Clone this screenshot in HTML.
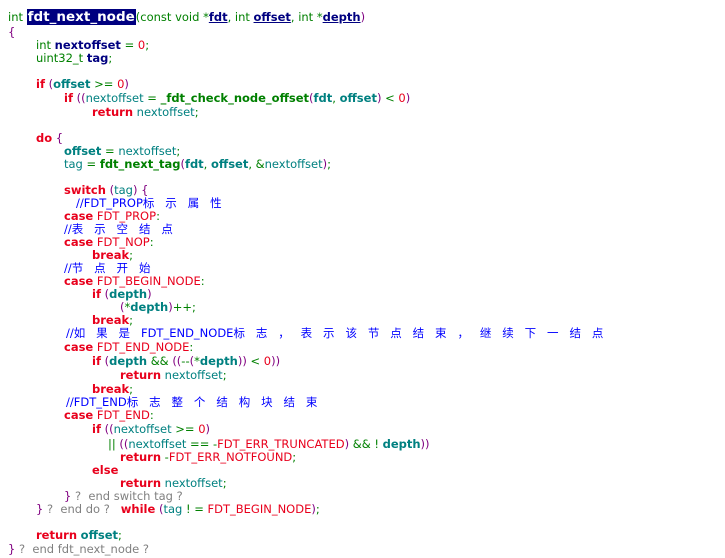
<!DOCTYPE html>
<html><head><meta charset="utf-8"><style>
body{margin:0;width:725px;height:558px;background:#fff;overflow:hidden;position:relative;font-family:"DejaVu Sans","Liberation Sans","Noto Sans CJK SC",sans-serif;font-size:11.5px;}
.l{position:absolute;white-space:pre;height:14px;line-height:14px;}
.k{color:#e8001c;font-weight:bold}
.c{color:#e8001c}
.v{color:#008080}
.vb{color:#008080;font-weight:bold}
.p{color:#000080;font-weight:bold}
.pu{color:#000080;font-weight:bold;text-decoration:underline}
.g{color:#008000}
.f{color:#008000;font-weight:bold}
.pr{color:#800080}
.n{color:#e8001c}
.cm{color:#0000ff}
.cj{letter-spacing:10.9px}
.gr{color:#808080}
.hl{background:#000080;color:#fff;font-weight:bold;font-size:13.5px;padding:0 1px}
</style></head><body>
<div class="l" style="left:8px;top:10px"><span class="g">int </span><span class="hl">fdt_next_node</span><span class="g">(const void *</span><span class="pu">fdt</span><span class="g">, int </span><span class="pu">offset</span><span class="g">, int *</span><span class="pu">depth</span><span class="pr">)</span></div>
<div class="l pr" style="left:8px;top:25px">{</div>
<div class="l" style="left:36px;top:38px"><span class="g">int </span><span class="p">nextoffset</span><span class="g"> = </span><span class="n">0</span><span class="g">;</span></div>
<div class="l" style="left:36px;top:51px"><span class="g">uint32_t </span><span class="p">tag</span><span class="g">;</span></div>
<div class="l" style="left:36px;top:77px"><span class="k">if</span> <span class="pr">(</span><span class="vb">offset</span><span class="g"> &gt;= </span><span class="n">0</span><span class="pr">)</span></div>
<div class="l" style="left:64px;top:91px"><span class="k">if</span> <span class="pr">((</span><span class="v">nextoffset</span><span class="g"> = </span><span class="f">_fdt_check_node_offset</span><span class="pr">(</span><span class="vb">fdt</span><span class="g">, </span><span class="vb">offset</span><span class="pr">)</span><span class="g"> &lt; </span><span class="n">0</span><span class="pr">)</span></div>
<div class="l" style="left:92px;top:105px"><span class="k">return</span> <span class="v">nextoffset</span><span class="g">;</span></div>
<div class="l" style="left:36px;top:131px"><span class="k">do</span> <span class="pr">{</span></div>
<div class="l" style="left:64px;top:144px"><span class="vb">offset</span><span class="g"> = </span><span class="v">nextoffset</span><span class="g">;</span></div>
<div class="l" style="left:64px;top:157px"><span class="v">tag</span><span class="g"> = </span><span class="f">fdt_next_tag</span><span class="pr">(</span><span class="vb">fdt</span><span class="g">, </span><span class="vb">offset</span><span class="g">, &amp;</span><span class="v">nextoffset</span><span class="pr">)</span><span class="g">;</span></div>
<div class="l" style="left:64px;top:183px"><span class="k">switch</span> <span class="pr">(</span><span class="v">tag</span><span class="pr">) {</span></div>
<div class="l cm" style="left:76px;top:196px">//FDT_PROP<span class="cj">标示属性</span></div>
<div class="l" style="left:64px;top:209px"><span class="k">case</span> <span class="c">FDT_PROP</span><span class="g">:</span></div>
<div class="l cm" style="left:64px;top:222px">//<span class="cj">表示空结点</span></div>
<div class="l" style="left:64px;top:235px"><span class="k">case</span> <span class="c">FDT_NOP</span><span class="g">:</span></div>
<div class="l" style="left:92px;top:248px"><span class="k">break</span><span class="g">;</span></div>
<div class="l cm" style="left:64px;top:261px">//<span class="cj">节点开始</span></div>
<div class="l" style="left:64px;top:274px"><span class="k">case</span> <span class="c">FDT_BEGIN_NODE</span><span class="g">:</span></div>
<div class="l" style="left:92px;top:287px"><span class="k">if</span> <span class="pr">(</span><span class="vb">depth</span><span class="pr">)</span></div>
<div class="l" style="left:120px;top:300px"><span class="pr">(</span><span class="g">*</span><span class="vb">depth</span><span class="pr">)</span><span class="g">++;</span></div>
<div class="l" style="left:92px;top:313px"><span class="k">break</span><span class="g">;</span></div>
<div class="l cm" style="left:66px;top:326px">//<span class="cj">如果是</span>FDT_END_NODE<span class="cj">标志，表示该节点结束，继续下一结点</span></div>
<div class="l" style="left:64px;top:340px"><span class="k">case</span> <span class="c">FDT_END_NODE</span><span class="g">:</span></div>
<div class="l" style="left:92px;top:354px"><span class="k">if</span> <span class="pr">(</span><span class="vb">depth</span><span class="g"> &amp;&amp; </span><span class="pr">((</span><span class="g">--</span><span class="pr">(</span><span class="g">*</span><span class="vb">depth</span><span class="pr">)</span><span class="pr">)</span><span class="g"> &lt; </span><span class="n">0</span><span class="pr">))</span></div>
<div class="l" style="left:120px;top:368px"><span class="k">return</span> <span class="v">nextoffset</span><span class="g">;</span></div>
<div class="l" style="left:92px;top:382px"><span class="k">break</span><span class="g">;</span></div>
<div class="l cm" style="left:66px;top:395px">//FDT_END<span class="cj">标志整个结构块结束</span></div>
<div class="l" style="left:64px;top:408px"><span class="k">case</span> <span class="c">FDT_END</span><span class="g">:</span></div>
<div class="l" style="left:92px;top:422px"><span class="k">if</span> <span class="pr">((</span><span class="v">nextoffset</span><span class="g"> &gt;= </span><span class="n">0</span><span class="pr">)</span></div>
<div class="l" style="left:108px;top:437px"><span class="g">|| </span><span class="pr">((</span><span class="v">nextoffset</span><span class="g"> == -</span><span class="c">FDT_ERR_TRUNCATED</span><span class="pr">)</span><span class="g"> &amp;&amp; ! </span><span class="vb">depth</span><span class="pr">))</span></div>
<div class="l" style="left:120px;top:450px"><span class="k">return</span> <span class="g">-</span><span class="c">FDT_ERR_NOTFOUND</span><span class="g">;</span></div>
<div class="l" style="left:92px;top:463px"><span class="k">else</span></div>
<div class="l" style="left:120px;top:476px"><span class="k">return</span> <span class="v">nextoffset</span><span class="g">;</span></div>
<div class="l" style="left:64px;top:489px"><span class="pr">}</span><span class="gr"> ?  end switch tag ?</span></div>
<div class="l" style="left:36px;top:502px"><span class="pr">}</span><span class="gr"> ?  end do ?  </span> <span class="k">while</span> <span class="pr">(</span><span class="v">tag</span><span class="g"> ! = </span><span class="c">FDT_BEGIN_NODE</span><span class="pr">)</span><span class="g">;</span></div>
<div class="l" style="left:36px;top:528px"><span class="k">return</span> <span class="vb">offset</span><span class="g">;</span></div>
<div class="l" style="left:8px;top:542px"><span class="pr">}</span><span class="gr"> ?  end fdt_next_node ?</span></div>
</body></html>
